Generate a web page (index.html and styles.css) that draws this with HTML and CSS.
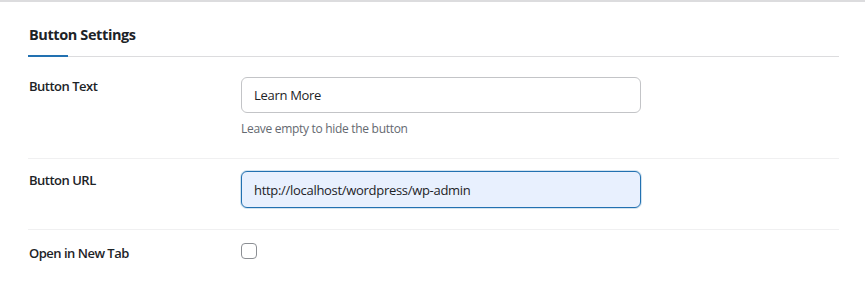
FILE: index.html
```html
<!DOCTYPE html>
<html>
<head>
  <title>Button Settings</title>
  <meta charset="UTF-8">
  <link rel="stylesheet" href="styles.css">
</head>
<body>
  <div class="settings-panel">
    <h2 class="section-title"><span>Button Settings</span></h2>

    <div class="field-row">
      <label class="field-label" for="button-text">Button Text</label>
      <div class="field-control">
        <input type="text" id="button-text" class="text-input" value="Learn More">
        <p class="description">Leave empty to hide the button</p>
      </div>
    </div>

    <div class="field-row">
      <label class="field-label" for="button-url">Button URL</label>
      <div class="field-control">
        <input type="text" id="button-url" class="text-input autofilled" value="http://localhost/wordpress/wp-admin">
      </div>
    </div>

    <div class="field-row last">
      <label class="field-label" for="new-tab">Open in New Tab</label>
      <div class="field-control">
        <input type="checkbox" id="new-tab" class="checkbox">
      </div>
    </div>
  </div>
</body>
</html>
```

FILE: styles.css
```css
body {
  margin: 0;
  font-family: "Open Sans", "Noto Sans", sans-serif;
  color: #1d2327;
  background-color: #fff;
  border-top: 2px solid #dcdcde;
}

.settings-panel {
  padding: 0 26px 0 28px;
}

.section-title {
  margin: 0;
  padding-top: 23px;
  font-size: 14.5px;
  font-weight: 700;
  line-height: 20px;
  letter-spacing: -0.4px;
  color: #1d2327;
  border-bottom: 1px solid #dcdcde;
}

.section-title span {
  display: inline-block;
  padding: 0 0 11px 1px;
  position: relative;
}

.section-title span::after {
  content: "";
  position: absolute;
  left: 0;
  bottom: -1px;
  width: 40px;
  height: 2px;
  background-color: #2271b1;
}

.field-row {
  display: flex;
  padding: 20px 0 21px;
  border-bottom: 1px solid #f0f0f1;
}

.field-row + .field-row {
  padding-top: 12px;
}

.field-row.last {
  border-bottom: none;
}

.field-label {
  width: 213px;
  flex-shrink: 0;
  padding: 0 0 0 1px;
  box-sizing: border-box;
  font-size: 13px;
  font-weight: 600;
  line-height: 18px;
  letter-spacing: -0.5px;
}

.field-row.last .field-label {
  padding-top: 2px;
}

.field-control {
  flex: 1;
}

.text-input {
  display: block;
  box-sizing: border-box;
  width: 400px;
  height: 36px;
  margin: 0;
  padding: 0 12px;
  font-family: inherit;
  font-size: 13px;
  letter-spacing: -0.3px;
  color: #1d2327;
  background-color: #fff;
  border: 1px solid #c3c4c7;
  border-radius: 6px;
  outline: none;
}

.text-input.autofilled {
  height: 37px;
  background-color: #e8f0fe;
  border-color: #2271b1;
  box-shadow: 0 0 0 1px rgba(34, 113, 177, 0.2);
}

.description {
  margin: 8px 0 0;
  font-size: 12px;
  line-height: 16px;
  letter-spacing: -0.3px;
  color: #646970;
}

.checkbox {
  appearance: none;
  display: block;
  box-sizing: border-box;
  width: 16px;
  height: 16px;
  margin: 1px 0 0;
  border: 1px solid #8c8f94;
  border-radius: 4px;
  background-color: #fff;
}
```
